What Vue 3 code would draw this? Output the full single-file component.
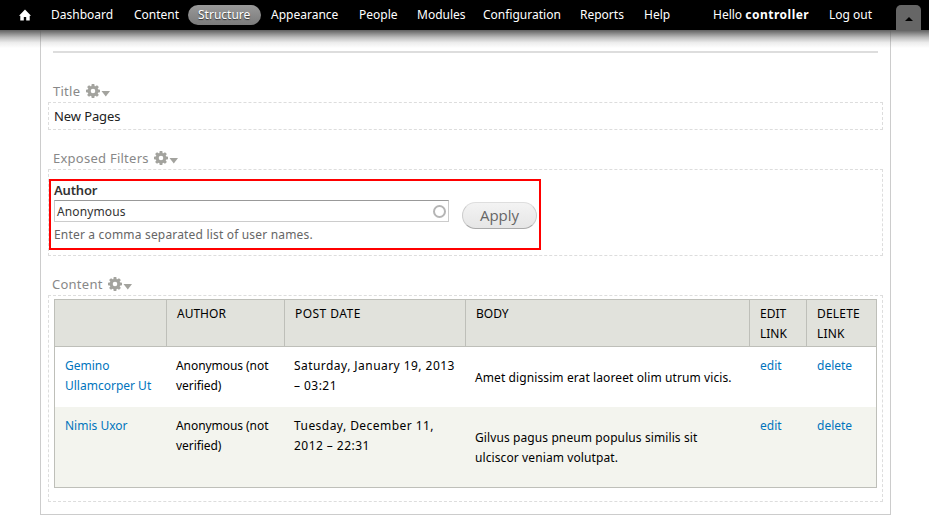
<script setup>
import { h } from 'vue'

const menu = [
  { label: 'Dashboard', cls: 'm-dash' },
  { label: 'Content', cls: 'm-content' },
  { label: 'Structure', cls: 'm-structure' },
  { label: 'Appearance', cls: 'm-appear' },
  { label: 'People', cls: 'm-people' },
  { label: 'Modules', cls: 'm-modules' },
  { label: 'Configuration', cls: 'm-config' },
  { label: 'Reports', cls: 'm-reports' },
  { label: 'Help', cls: 'm-help' },
]

const columns = [[''], ['AUTHOR'], ['POST DATE'], ['BODY'], ['EDIT', 'LINK'], ['DELETE', 'LINK']]

const rows = [
  {
    title: ['Gemino', 'Ullamcorper Ut'],
    date: ['Saturday, January 19, 2013', '– 03:21'],
    body: ['Amet dignissim erat laoreet olim utrum vicis.'],
  },
  {
    title: ['Nimis Uxor'],
    date: ['Tuesday, December 11,', '2012 – 22:31'],
    body: ['Gilvus pagus pneum populus similis sit', 'ulciscor veniam volutpat.'],
  },
]

const teeth = [0, 45, 90, 135, 180, 225, 270, 315]

const GearMenu = () =>
  h('svg', { width: 25, height: 14, viewBox: '0 0 25 14' }, [
    h('circle', { cx: 7, cy: 7, r: 3.8, fill: 'none', stroke: '#a3a39e', 'stroke-width': 3 }),
    ...teeth.map((a) =>
      h('path', { d: 'M5.3 2.5 5.7 0h2.6l.4 2.5z', fill: '#a3a39e', transform: `rotate(${a} 7 7)` }),
    ),
    h('path', { d: 'M15.5 7h8.5l-4.2 5.5z', fill: '#a3a39e' }),
  ])
</script>

<template>
  <div class="screen">
    <header class="toolbar">
      <svg class="home" width="12" height="12" viewBox="0 0 12 12">
        <path d="M6 .5 12 6.7h-1.3V11.5H7.2V8H4.8v3.5H1.3V6.7H0z" fill="#fff" />
      </svg>
      <nav class="menu">
        <a v-for="m in menu" :key="m.label" :class="m.cls"><span>{{ m.label }}</span></a>
      </nav>
      <div class="user">
        <span class="hello">Hello <strong>controller</strong></span>
        <span>Log out</span>
      </div>
      <div class="toggle">
        <svg width="8" height="4" viewBox="0 0 8 4"><path d="M0 4 4 0l4 4z" fill="#000" /></svg>
      </div>
    </header>

    <main class="panel">
      <hr class="rule" />

      <h3 class="label title-label"><span>Title</span><GearMenu /></h3>
      <section class="box title-box">New Pages</section>

      <h3 class="label filter-label"><span>Exposed Filters</span><GearMenu /></h3>
      <section class="box filter-box">
        <form class="filters">
          <div class="field">
            <label>Author</label>
            <div class="input">
              <span>Anonymous</span>
              <i class="throbber"></i>
            </div>
            <p>Enter a comma separated list of user names.</p>
          </div>
          <button type="button">Apply</button>
        </form>
      </section>

      <h3 class="label content-label"><span>Content</span><GearMenu /></h3>
      <section class="box content-box">
        <table>
          <colgroup>
            <col class="c1" /><col class="c2" /><col class="c3" />
            <col class="c4" /><col class="c5" /><col class="c6" />
          </colgroup>
          <thead>
            <tr>
              <th v-for="(c, i) in columns" :key="i"><div v-for="l in c" :key="l">{{ l }}</div></th>
            </tr>
          </thead>
          <tbody>
            <tr v-for="(r, i) in rows" :key="i">
              <td class="link first"><div v-for="l in r.title" :key="l">{{ l }}</div></td>
              <td class="author"><div>Anonymous (not</div><div>verified)</div></td>
              <td class="date"><div v-for="l in r.date" :key="l">{{ l }}</div></td>
              <td class="body"><div v-for="l in r.body" :key="l">{{ l }}</div></td>
              <td class="link action">edit</td>
              <td class="link action">delete</td>
            </tr>
          </tbody>
        </table>
      </section>
    </main>
  </div>
</template>

<style>
body {
  background: #fff;
  overflow: hidden;
}
</style>

<style scoped>
.screen {
  width: 929px;
  height: 529px;
  overflow: hidden;
  box-sizing: border-box;
  font-family: 'Noto Sans', 'Open Sans', sans-serif;
  font-size: 12px;
  color: #000;
}
.toolbar {
  position: relative;
  display: flex;
  box-sizing: border-box;
  height: 30px;
  padding: 0 8px 0 19px;
  background: #000;
  color: #fff;
  line-height: 20px;
}
.toolbar::after {
  content: '';
  position: absolute;
  top: 30px;
  left: 0;
  width: 100%;
  height: 18px;
  background: linear-gradient(#606060 0, rgba(90, 90, 90, 0.78) 14%, rgba(100, 100, 100, 0.42) 42%, rgba(130, 130, 130, 0.15) 70%, rgba(255, 255, 255, 0));
}
.home {
  margin-top: 9px;
  margin-right: 10px;
}
.menu {
  display: flex;
  padding-top: 5px;
}
.menu a {
  box-sizing: border-box;
  height: 20px;
  padding-left: 10px;
  white-space: nowrap;
}
.m-dash { width: 83px; }
.m-content { width: 64px; }
.m-structure {
  width: 73px;
  border-radius: 10px;
  background: linear-gradient(#999, #7b7b7b);
  text-shadow: 0 1px 1px #333;
}
.m-appear { width: 88px; }
.m-people { width: 58px; }
.m-modules { width: 66px; }
.m-config { width: 97px; }
.m-reports { width: 64px; }
.m-help { width: 79px; }
.user {
  display: flex;
  padding-top: 5px;
  white-space: nowrap;
}
.hello {
  width: 116px;
}
.hello strong {
  letter-spacing: 0.5px;
}
.toggle {
  display: flex;
  align-items: center;
  justify-content: center;
  width: 25px;
  height: 25px;
  margin: 5px 0 0 auto;
  padding-top: 3px;
  box-sizing: border-box;
  border-radius: 5px 5px 0 0;
  background: #666;
}
.panel {
  box-sizing: border-box;
  width: 851px;
  height: 485px;
  margin-left: 40px;
  padding: 21px 7px 0;
  border: 1px solid #ccc;
  border-top: 0;
}
.rule {
  height: 2px;
  margin: 0 5px;
  border: 0;
  background: #ddd;
}
.label {
  display: flex;
  align-items: center;
  height: 18px;
  margin: 0;
  padding-left: 5px;
  font-size: 13px;
  font-weight: 400;
  line-height: 18px;
  color: #888;
}
.label svg {
  margin-left: 5px;
}
.title-label {
  margin-top: 29px;
}
.title-label span { width: 28px; }
.filter-label span { width: 96px; }
.content-label span { width: 51px; }
.title-label span, .filter-label span, .content-label span {
  white-space: nowrap;
  letter-spacing: 0.25px;
}
.box {
  box-sizing: border-box;
  width: 835px;
  border: 1px dashed #ddd;
}
.title-box {
  height: 28px;
  margin-top: 2px;
  padding: 3px 5px;
  font-size: 13px;
  line-height: 20px;
  letter-spacing: -0.1px;
  color: #222;
}
.filter-label {
  margin-top: 19px;
}
.filter-box {
  height: 87px;
  margin-top: 2px;
  padding-top: 9px;
}
.filters {
  display: flex;
  box-sizing: border-box;
  width: 492px;
  height: 71px;
  padding-left: 3px;
  border: 2px solid #f00;
}
.field {
  width: 395px;
}
.field label {
  display: block;
  height: 19px;
  font-size: 13px;
  font-weight: 600;
  line-height: 18px;
  letter-spacing: -0.15px;
  color: #333;
}
.input {
  display: flex;
  align-items: center;
  justify-content: space-between;
  box-sizing: border-box;
  height: 22px;
  padding: 0 3px 0 2px;
  border: 1px solid #ccc;
  border-top-color: #999;
  line-height: 20px;
  color: #333;
}
.input span {
  padding-top: 1px;
  letter-spacing: 0.12px;
}
.throbber {
  box-sizing: border-box;
  width: 13px;
  height: 13px;
  margin-right: -1px;
  border: 2px solid #b5b5b5;
  border-radius: 50%;
}
.field p {
  margin: 3px 0 0;
  line-height: 20px;
  letter-spacing: 0.18px;
  white-space: nowrap;
  color: #666;
}
button {
  width: 75px;
  height: 27px;
  margin: 21px 0 0 13px;
  padding: 0;
  border: 1px solid #ccc;
  border-top-color: #dedede;
  border-bottom-color: #aaa;
  border-radius: 14px;
  background: linear-gradient(#f3f3f3, #e6e6e6);
  font-family: 'Open Sans', 'Noto Sans', sans-serif;
  font-size: 15px;
  line-height: 23px;
  color: #666;
}
.content-label {
  margin-top: 19px;
  padding-left: 4px;
}
.content-box {
  height: 207px;
  margin-top: 2px;
  padding: 3px 5px;
}
table {
  width: 823px;
  table-layout: fixed;
  border: 1px solid #bebfb9;
  border-spacing: 0;
  line-height: 20px;
  white-space: nowrap;
}
.c1 { width: 112px; }
.c2 { width: 118px; }
.c3 { width: 181px; }
.c4 { width: 284px; }
.c5 { width: 57px; }
.c6 { width: 69px; }
th {
  box-sizing: border-box;
  height: 47px;
  padding: 4px 0 0 10px;
  border-right: 1px solid #bebfb9;
  border-bottom: 1px solid #bebfb9;
  background: #e1e2dc;
  font-weight: 400;
  text-align: left;
  vertical-align: top;
}
th:nth-child(3) {
  letter-spacing: 0.45px;
}
th:last-child {
  border-right: 0;
  letter-spacing: 0.2px;
}
td {
  box-sizing: border-box;
  height: 60px;
  padding: 9px 0 0 9px;
  vertical-align: top;
}
tbody tr:last-child td {
  height: 80px;
  background: #f3f4ee;
}
td.first {
  padding-left: 10px;
}
td.author {
  letter-spacing: -0.06px;
}
td.date {
  letter-spacing: 0.45px;
}
td.body {
  padding-top: 21px;
  letter-spacing: 0.1px;
}
td.action {
  padding-left: 10px;
}
.link {
  color: #0074bd;
}
</style>
